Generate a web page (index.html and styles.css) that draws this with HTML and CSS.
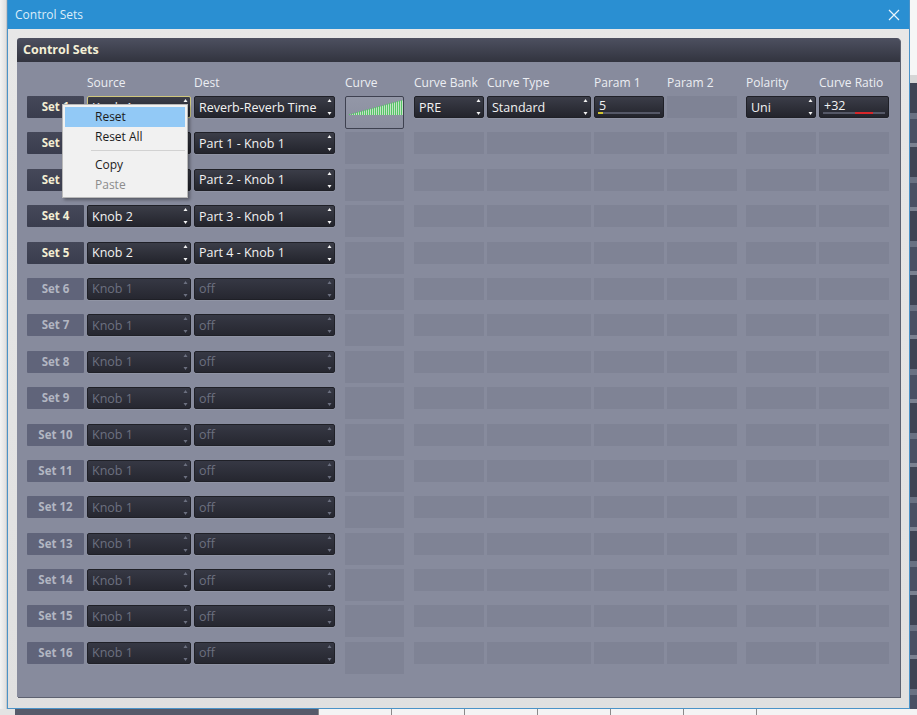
FILE: index.html
```html
<!DOCTYPE html>
<html>
<head>
<meta charset="utf-8">
<link rel="stylesheet" href="styles.css">
</head>
<body>
<div class="stage">
  <div class="bg-left"></div>
  <div class="window">
    <div class="titlebar">
      <span class="title">Control Sets</span>
      <svg class="close" width="12" height="12" viewBox="0 0 12 12"><path d="M1 1L11 11M11 1L1 11" stroke="#eaf4fb" stroke-width="1.2"/></svg>
    </div>
    <div class="frame">
      <div class="panel">
        <div class="panel-head">Control Sets</div>
        <div class="panel-body">
          <div class="row head">
            <div class="c-set"></div>
            <div class="c-src">Source</div>
            <div class="c-dst">Dest</div>
            <div class="c-curve">Curve</div>
            <div class="c-bank">Curve Bank</div>
            <div class="c-type">Curve Type</div>
            <div class="c-p1">Param 1</div>
            <div class="c-p2">Param 2</div>
            <div class="c-pol">Polarity</div>
            <div class="c-ratio">Curve Ratio</div>
          </div>
          <div id="rows"></div>
        </div>
      </div>
    </div>
  </div>
  <div class="bg-right">
    <div class="br-top"></div>
    <div class="br-mid"></div>
    <div class="br-dark"></div>
  </div>
  <div class="bg-bottom">
    <div class="bb-light"></div>
    <div class="bb-dark"></div>
    <div class="bb-tabs"><span></span><span></span><span></span><span></span><span></span><span></span><span></span></div>
  </div>

  <div class="menu">
    <div class="mi hl">Reset</div>
    <div class="mi">Reset All</div>
    <div class="msep"></div>
    <div class="mi">Copy</div>
    <div class="mi dis">Paste</div>
  </div>
</div>
<script>
(function(){
  var spin = '<svg class="spin" width="5" height="20" viewBox="0 0 5 20"><path d="M0.5 5L2.5 2L4.5 5Z"/><path d="M0.5 15L2.5 18L4.5 15Z"/></svg>';
  var bars = '', pale = '';
  for (var k = 0; k < 27; k++) {
    var x = 3 + 2 * k + 0.5;
    var top = (17 - k * 0.54).toFixed(1);
    bars += 'M' + x + ' 18V' + top;
    pale += 'M' + (x + 1) + ' 18V' + (17 - k * 0.54 + 0.6).toFixed(1);
  }
  var curve = '<div class="c-curve curve-on"><svg width="57" height="30" viewBox="0 0 57 30">' +
    '<path d="M3 17.5H56" stroke="#b7d5ba" stroke-width="1" stroke-dasharray="1 1"/>' +
    '<path d="' + pale + '" stroke="#c3e3c6" stroke-width="1"/>' +
    '<path d="' + bars + '" stroke="#55c566" stroke-width="1"/>' +
    '</svg></div>';
  var html = '';
  for (var i = 1; i <= 16; i++) {
    var on = i <= 5;
    var src = i === 1 ? 'Knob 1' : (on ? 'Knob 2' : 'Knob 1');
    var dst = i === 1 ? 'Reverb-Reverb Time' : (on ? 'Part ' + (i - 1) + ' - Knob 1' : 'off');
    var cls = on ? '' : ' off';
    html += '<div class="row' + cls + '">';
    html += '<div class="c-set setlbl">Set ' + i + '</div>';
    html += '<div class="c-src box' + (i === 1 ? ' sel' : '') + '"><span>' + src + '</span>' + spin + '</div>';
    html += '<div class="c-dst box"><span>' + dst + '</span>' + spin + '</div>';
    if (i === 1) {
      html += curve;
      html += '<div class="c-bank box"><span>PRE</span>' + spin + '</div>';
      html += '<div class="c-type box"><span>Standard</span>' + spin + '</div>';
      html += '<div class="c-p1 box val"><span>5</span><i class="track"><b class="fill-y"></b></i></div>';
      html += '<div class="c-p2 ph"></div>';
      html += '<div class="c-pol box"><span>Uni</span>' + spin + '</div>';
      html += '<div class="c-ratio box val"><span>+32</span><i class="track"><b class="fill-r"></b></i></div>';
    } else {
      html += '<div class="c-curve ph tall"></div>';
      html += '<div class="c-bank ph"></div><div class="c-type ph"></div><div class="c-p1 ph"></div><div class="c-p2 ph"></div><div class="c-pol ph"></div><div class="c-ratio ph"></div>';
    }
    html += '</div>';
  }
  document.getElementById('rows').innerHTML = html;
})();
</script>
</body>
</html>
```
FILE: styles.css
```css
html, body {
  margin: 0;
  padding: 0;
}
body {
  width: 917px;
  height: 715px;
  overflow: hidden;
  font-family: "Open Sans", "Noto Sans", sans-serif;
  font-size: 12px;
  background: #e9e9e9;
}
.stage {
  position: relative;
  display: grid;
  grid-template-columns: 7px 903px 7px;
  grid-template-rows: 709px 6px;
  width: 917px;
  height: 715px;
}
.bg-left {
  background: linear-gradient(90deg, #f3f3f3, #e0e0e0);
  border-right: 1px solid #c9c9c9;
}
.bg-right {
  display: flex;
  flex-direction: column;
}
.br-top { height: 75px; background: #f6f6f6; }
.br-mid { height: 8px; background: #d6d6d6; }
.br-dark {
  flex: 1;
  background: repeating-linear-gradient(180deg, #3f4454 0 30px, #6a7182 30px 36px, #4a5063 36px 60px, #7b8190 60px 64px);
}
.bg-bottom {
  grid-column: 1 / 4;
  display: flex;
}
.bb-light { width: 15px; background: #e3e3e3; }
.bb-dark { width: 303px; background: #565a6a; }
.bb-tabs {
  flex: 1;
  display: flex;
  background: #f4f4f4;
}
.bb-tabs span {
  width: 72px;
  border-left: 1px solid #8a8a8a;
}

.window {
  box-sizing: border-box;
  border: 1px solid #4b93c8;
  border-top: none;
  background: #e5e5e5;
  display: flex;
  flex-direction: column;
}
.titlebar {
  height: 29px;
  background: #2a8fd2;
  display: flex;
  align-items: center;
  justify-content: space-between;
  padding: 0 9px 0 7px;
  flex: none;
}
.title {
  color: #dcedf9;
  font-size: 12px;
}
.close { display: block; }
.frame {
  flex: 1;
  padding: 9px 9px 11px 9px;
  background: linear-gradient(180deg, #e7e7e7, #e0e0e0);
  display: flex;
}
.panel {
  flex: 1;
  display: flex;
  flex-direction: column;
  border-radius: 3px 3px 0 0;
  box-shadow: 1px 1px 0 #5d6170;
}
.panel-head {
  height: 24px;
  flex: none;
  box-sizing: border-box;
  padding-left: 6px;
  line-height: 24px;
  font-weight: bold;
  font-size: 12.5px;
  color: #f4efd6;
  background: linear-gradient(180deg, #4d5060, #32343f);
  border-radius: 3px 3px 0 0;
}
.panel-body {
  flex: 1;
  background: #878b9d;
  padding-left: 10px;
}

.row {
  display: flex;
  align-items: flex-start;
  height: 36.4px;
}
.row.head {
  height: 34px;
  box-sizing: border-box;
  padding-top: 12px;
  line-height: 18px;
  color: #eceef3;
  font-size: 12px;
}
.c-set { width: 57px; flex: none; }
.c-src { width: 104px; margin-left: 3px; flex: none; }
.c-dst { width: 141px; margin-left: 3px; flex: none; }
.c-curve { width: 59px; margin-left: 10px; flex: none; }
.c-bank { width: 70px; margin-left: 10px; flex: none; }
.c-type { width: 104px; margin-left: 3px; flex: none; }
.c-p1 { width: 70px; margin-left: 3px; flex: none; }
.c-p2 { width: 70px; margin-left: 3px; flex: none; }
.c-pol { width: 70px; margin-left: 9px; flex: none; }
.c-ratio { width: 70px; margin-left: 3px; flex: none; }

.setlbl {
  height: 22px;
  line-height: 22px;
  text-align: center;
  font-weight: bold;
  font-size: 11.5px;
  color: #f3eed3;
  background: linear-gradient(180deg, #454859, #3a3d4e);
  border-radius: 1px;
}
.off .setlbl {
  color: #b2b6c2;
  background: #60647a;
}

.box {
  box-sizing: border-box;
  height: 22px;
  position: relative;
  display: flex;
  align-items: center;
  padding-left: 4px;
  color: #f2f2f2;
  font-size: 12.5px;
  background: linear-gradient(180deg, #3b3d48, #23242c);
  border: 1px solid #1f2027;
  border-radius: 2px;
  box-shadow: 0 1px 0 rgba(255, 255, 255, 0.08);
  white-space: nowrap;
  overflow: hidden;
}
.box.sel {
  border-color: #cfc67c;
}
.off .box {
  color: #6c7080;
  background: linear-gradient(180deg, #363844, #262730);
}
.spin {
  position: absolute;
  right: 2px;
  top: 0;
  fill: #f4f4f4;
}
.off .spin { fill: #6c7080; }

.box.val {
  align-items: flex-start;
  padding-top: 1px;
  line-height: 15px;
}
.track {
  position: absolute;
  left: 3px;
  right: 3px;
  bottom: 3px;
  height: 2px;
  background: #555867;
}
.fill-y {
  position: absolute;
  left: 0;
  top: 0;
  width: 5px;
  height: 2px;
  background: #d2c531;
}
.fill-r {
  position: absolute;
  left: 32px;
  top: 0;
  width: 18px;
  height: 2px;
  background: #d7262a;
}

.ph {
  height: 22px;
  background: #7f8395;
}
.ph.tall {
  height: 32px;
}
.curve-on {
  box-sizing: border-box;
  height: 33px;
  border: 1px solid #3e4150;
  border-radius: 2px;
  background: linear-gradient(180deg, #9397a7, #8a8e9f);
}
.curve-on svg { display: block; }

.menu {
  position: absolute;
  left: 62px;
  top: 104px;
  width: 126px;
  box-sizing: border-box;
  padding: 2px;
  background: #f1f1f1;
  border: 1px solid #b9b9b9;
  box-shadow: 2px 2px 3px rgba(0, 0, 0, 0.35);
  font-size: 12px;
  color: #1c1c1c;
}
.mi {
  height: 20px;
  line-height: 20px;
  padding-left: 30px;
}
.mi.hl { background: #92c9f6; }
.mi.dis { color: #8c8c8c; }
.msep {
  height: 8px;
  position: relative;
}
.msep::after {
  content: "";
  position: absolute;
  left: 26px;
  right: 0;
  top: 3px;
  border-top: 1px solid #d2d2d2;
}
```
